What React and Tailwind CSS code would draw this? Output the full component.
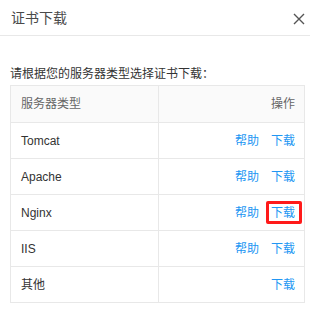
import React from "react";

const rows = [
  { name: "Tomcat", help: true },
  { name: "Apache", help: true },
  { name: "Nginx", help: true, mark: true },
  { name: "IIS", help: true },
  { name: "其他", help: false },
];

export default function App() {
  return (
    <div
      className="w-[310px] h-[311px] bg-white overflow-hidden"
      style={{ fontFamily: '"Liberation Sans", "Noto Sans CJK SC", sans-serif' }}
    >
      <div className="h-[36px] flex items-center justify-between pl-[11px] pr-[5px] border-b border-[#e8e8e8]">
        <span className="text-[14px] leading-[20px] text-[#4a4a4a]">证书下载</span>
        <svg width="12" height="12" viewBox="0 0 12 12" className="mt-[2px]">
          <path d="M1 1 L11 11 M11 1 L1 11" stroke="#555" strokeWidth="1.4" fill="none" />
        </svg>
      </div>
      <div className="pl-[10px] pt-[29px]">
        <div className="text-[12px] leading-[18px] text-[#333] mb-[2px]">请根据您的服务器类型选择证书下载：</div>
        <div className="w-[295px] border-l border-t border-[#e8e8e8] text-[12px]">
          <div className="grid grid-cols-[148px_146px] h-[37px] bg-[#fafafa] text-[#666]">
            <div className="border-r border-b border-[#e8e8e8] flex items-center pl-[10px]">服务器类型</div>
            <div className="border-r border-b border-[#e8e8e8] flex items-center justify-end pr-[9px]">操作</div>
          </div>
          {rows.map((r) => (
            <div key={r.name} className="grid grid-cols-[148px_146px] h-[36px] text-[#333]">
              <div className="border-r border-b border-[#e8e8e8] flex items-center pl-[10px]">{r.name}</div>
              <div className="border-r border-b border-[#e8e8e8] flex items-center justify-end gap-[12px] pr-[9px] text-[#2196f3]">
                {r.help && <span className="leading-[16px]">帮助</span>}
                <span className="relative leading-[16px]">
                  下载
                  {r.mark && (
                    <span className="absolute -left-[5px] -right-[7px] -top-[4px] -bottom-[3px] border-[3px] border-[#ff1a1a] rounded-[2px]" />
                  )}
                </span>
              </div>
            </div>
          ))}
        </div>
      </div>
    </div>
  );
}
